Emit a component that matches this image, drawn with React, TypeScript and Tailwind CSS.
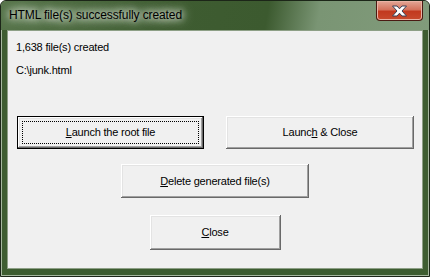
import React from 'react';

const btn3d =
  'shadow-[inset_-1px_-1px_#696969,inset_1px_1px_#ffffff,inset_-2px_-2px_#a0a0a0,inset_2px_2px_#e3e3e3]';

function WinButton({
  children,
  className,
  focused,
}: {
  children: React.ReactNode;
  className: string;
  focused?: boolean;
}) {
  if (focused) {
    return (
      <div className={`flex border border-black bg-[#f0f0f0] p-[4px] ${btn3d} ${className}`}>
        <div className="flex flex-1 items-center justify-center border border-dotted border-black text-black">
          {children}
        </div>
      </div>
    );
  }
  return (
    <div className={`flex items-center justify-center bg-[#f0f0f0] text-black ${btn3d} ${className}`}>
      {children}
    </div>
  );
}

export default function App() {
  return (
    <div
      className="flex h-[277px] w-[430px] flex-col overflow-hidden rounded-t-[6px] border border-[#1c2618] bg-[#3e5d31] shadow-[inset_1px_1px_#a7b8a0,inset_-1px_-1px_#a7b8a0] text-[11px] tracking-[-0.2px]"
      style={{ fontFamily: '"Liberation Sans", Arial, sans-serif' }}
    >
      {/* title bar */}
      <div className="flex h-[29px] bg-[linear-gradient(100deg,#56744a_0%,#3e5c31_40%,#3c5a2f_62%,#7a9574_74%,#819b7b_100%)]">
        <div className="flex flex-1 items-center pl-[8px] pb-[2px]">
          <span className="text-[12px] tracking-[-0.1px] text-black [text-shadow:0_0_6px_#e8eee4,0_0_10px_#e8eee4,0_0_14px_#dfe8da]">
            HTML file(s) successfully created
          </span>
        </div>
        <div className="mr-[6px] flex h-[20px] w-[47px] items-center justify-center rounded-b-[4px] border border-t-0 border-[#4a1a12] bg-[linear-gradient(#e3a797_0%,#d4735d_45%,#c2391f_55%,#c84a2d_100%)] shadow-[inset_0_0_0_1px_#eab3a5]">
          <svg width="17" height="12" viewBox="0 0 17 12">
            <path
              d="M1.5 1 H6 L8.5 3.8 L11 1 H15.5 L11 6 L15.5 11 H11 L8.5 8.2 L6 11 H1.5 L6 6 Z"
              fill="#ffffff"
              stroke="#3a3f55"
              strokeWidth="1"
              strokeLinejoin="round"
            />
          </svg>
        </div>
      </div>

      {/* client area */}
      <div className="mx-[6px] mb-[7px] flex flex-1 flex-col border border-[#8d9f86] bg-[#f0f0f0]">
        <div className="ml-[8px] mt-[10px] leading-[13px] text-black">1,638 file(s) created</div>
        <div className="ml-[8px] mt-[10px] leading-[13px] text-black">C:\junk.html</div>

        <div className="mt-[39px] flex pl-[9px]">
          <WinButton focused className="h-[33px] w-[187px]">
            <span>
              <u>L</u>aunch the root file
            </span>
          </WinButton>
          <WinButton className="ml-[22px] h-[33px] w-[188px]">
            <span>
              Launc<u>h</u> &amp; Close
            </span>
          </WinButton>
        </div>

        <div className="mt-[15px] flex justify-center">
          <WinButton className="h-[34px] w-[188px]">
            <span>
              <u>D</u>elete generated file(s)
            </span>
          </WinButton>
        </div>

        <div className="mt-[17px] flex justify-center">
          <WinButton className="h-[35px] w-[131px]">
            <span>
              <u>C</u>lose
            </span>
          </WinButton>
        </div>
      </div>
    </div>
  );
}
